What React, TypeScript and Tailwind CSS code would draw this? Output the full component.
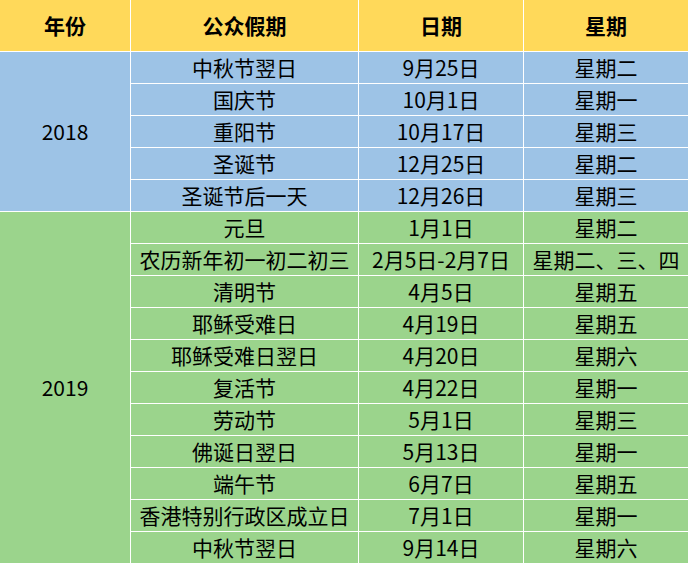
import { Fragment } from 'react';

const font = { fontFamily: '"Noto Sans CJK SC", "Noto Sans", sans-serif' };

const groups = [
  {
    year: '2018',
    bg: 'bg-[#9dc3e6]',
    span: 'row-span-5',
    rows: [
      ['中秋节翌日', '9月25日', '星期二'],
      ['国庆节', '10月1日', '星期一'],
      ['重阳节', '10月17日', '星期三'],
      ['圣诞节', '12月25日', '星期二'],
      ['圣诞节后一天', '12月26日', '星期三'],
    ],
  },
  {
    year: '2019',
    bg: 'bg-[#9bd48c]',
    span: 'row-span-11',
    rows: [
      ['元旦', '1月1日', '星期二'],
      ['农历新年初一初二初三', '2月5日-2月7日', '星期二、三、四'],
      ['清明节', '4月5日', '星期五'],
      ['耶稣受难日', '4月19日', '星期五'],
      ['耶稣受难日翌日', '4月20日', '星期六'],
      ['复活节', '4月22日', '星期一'],
      ['劳动节', '5月1日', '星期三'],
      ['佛诞日翌日', '5月13日', '星期一'],
      ['端午节', '6月7日', '星期五'],
      ['香港特别行政区成立日', '7月1日', '星期一'],
      ['中秋节翌日', '9月14日', '星期六'],
    ],
  },
];

const cell = 'flex items-center justify-center whitespace-nowrap';

export default function App() {
  return (
    <div
      style={font}
      className="grid h-[564px] w-[688px] grid-cols-[130px_227px_164px_164px] grid-rows-[51px_repeat(16,31px)] gap-px bg-white text-[21px] leading-none text-black"
    >
      {['年份', '公众假期', '日期', '星期'].map((h) => (
        <div key={h} className={`${cell} bg-[#ffd95a] font-bold`}>
          {h}
        </div>
      ))}
      {groups.map((g) => (
        <Fragment key={g.year}>
          <div className={`${cell} ${g.bg} ${g.span} col-start-1`}>{g.year}</div>
          {g.rows.map((r, i) =>
            r.map((t, j) => (
              <div key={`${g.year}-${i}-${j}`} className={`${cell} ${g.bg}`}>
                {t}
              </div>
            )),
          )}
        </Fragment>
      ))}
    </div>
  );
}
